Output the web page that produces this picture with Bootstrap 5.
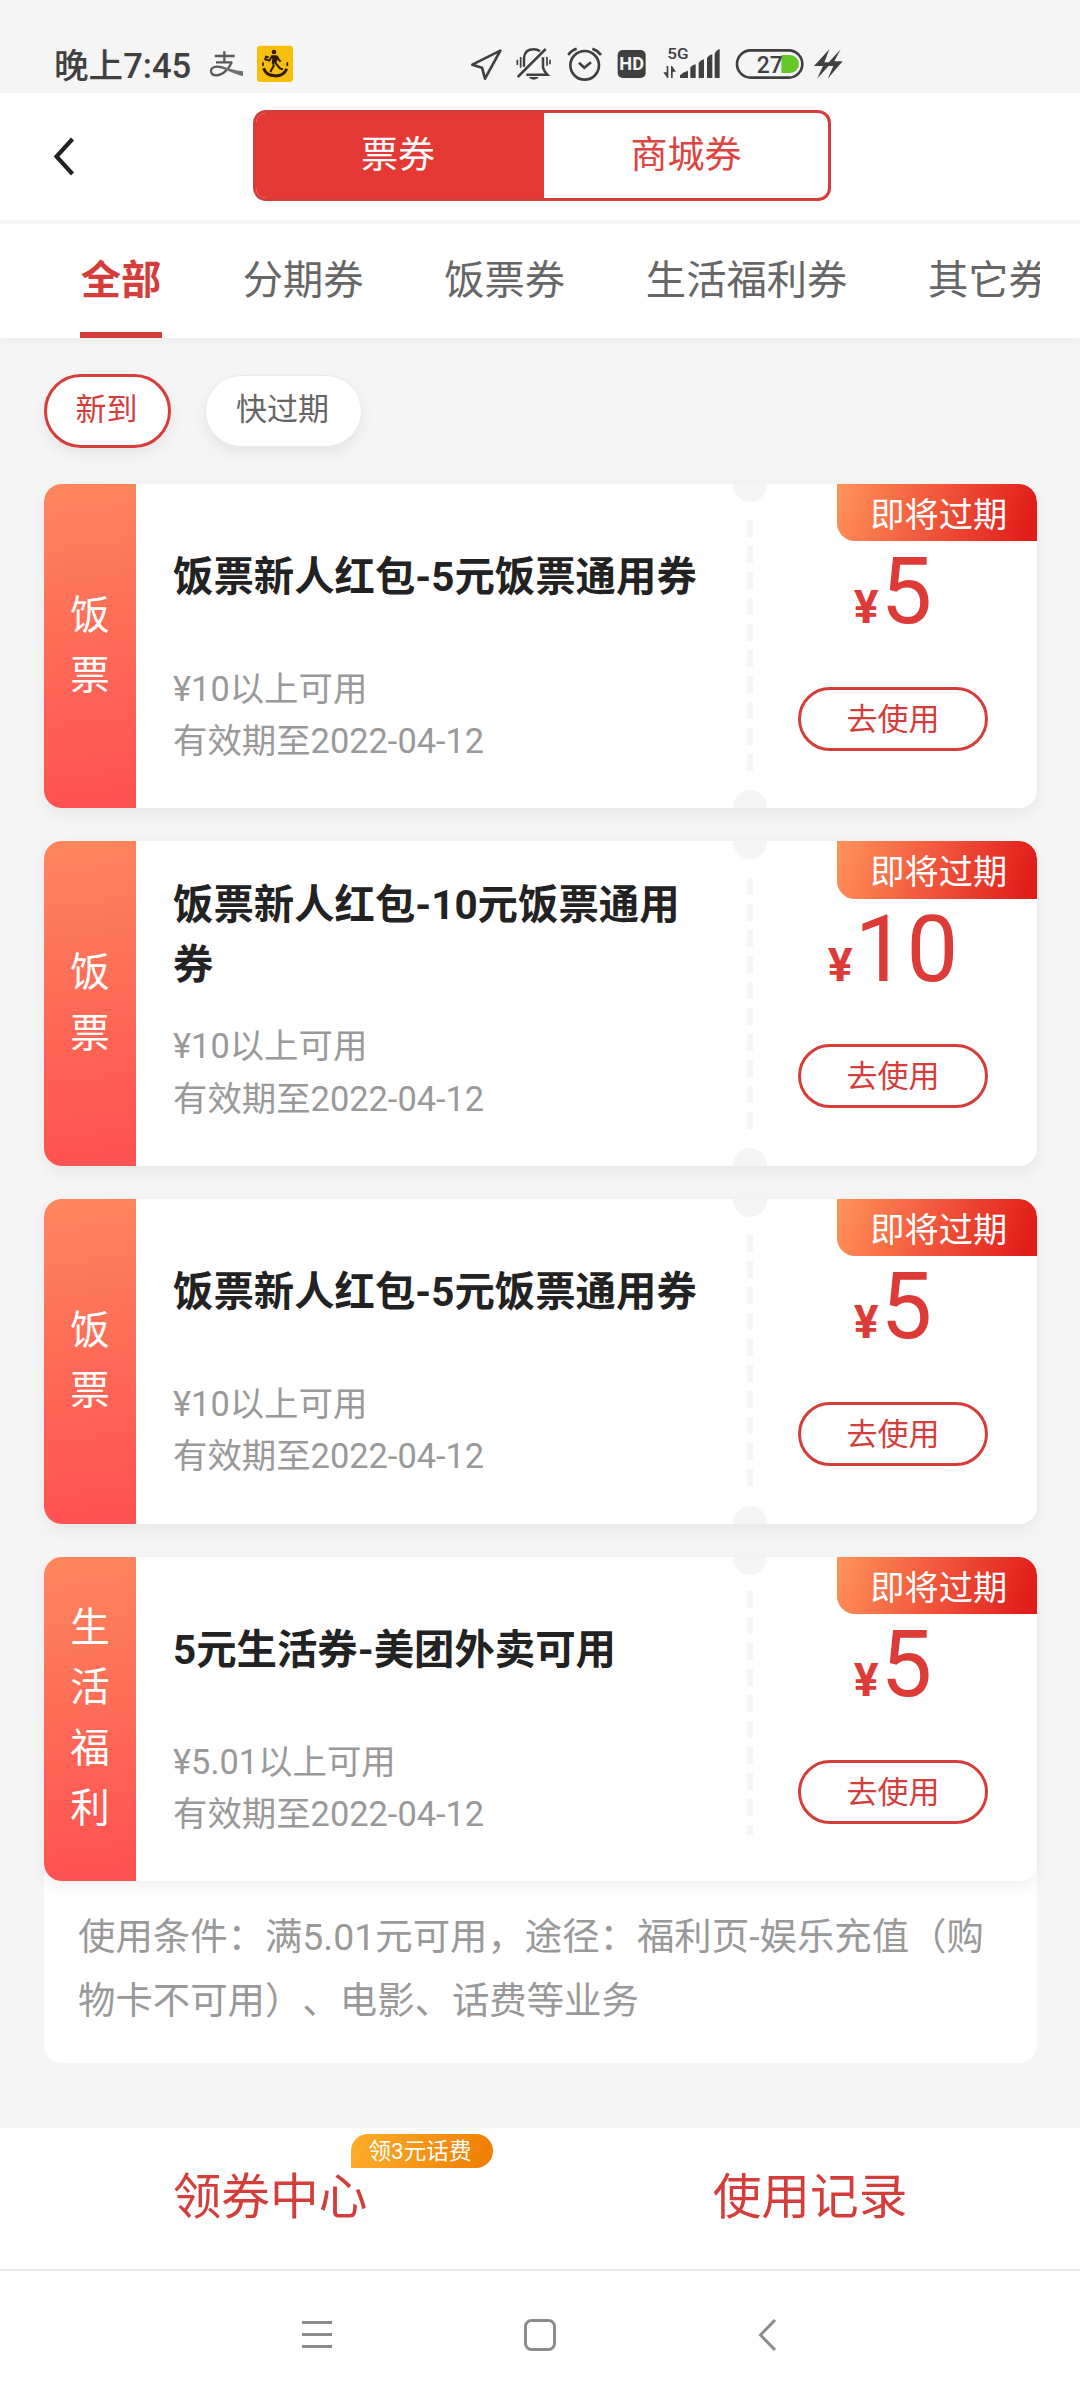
<!DOCTYPE html>
<html lang="zh-CN">
<head>
<meta charset="utf-8">
<meta name="viewport" content="width=device-width, initial-scale=1">
<title>票券</title>
<link href="https://cdn.jsdelivr.net/npm/bootstrap@5.3.0/dist/css/bootstrap.min.css" rel="stylesheet">
<style>
  :root { --cred: #d43d3a; --page: #f5f5f5; }
  body { width: 1080px; height: 2400px; margin: 0; overflow: hidden; background: var(--page); color: #666;
    font-family: Roboto, "Noto Sans CJK SC", sans-serif; text-spacing-trim: space-all; }
  .status-bar { height: 93px; padding: 0 0 0 54px; color: #404040; }
  .status-time { font-size: 34.6px; font-weight: 500; line-height: 40px; margin-top: 46px; width: 155px; white-space: nowrap; }
  .status-bar svg { flex: none; display: block; }
  .top-head { height: 127px; padding: 17px 0 0 253px; position: relative; }
  .head-back { position: absolute; left: 50px; top: 42px; }
  .seg-box { width: 578px; height: 91px; border: 3px solid var(--cred); border-radius: 13px; overflow: hidden; }
  .seg-item { font-size: 37px; line-height: 83px; color: #dd4440; padding-top: 1px; text-align: center; flex: 1 1 0; }
  .seg-item.on { background: #e53935; color: #fff; flex: 0 0 288px; padding-right: 4px; }
  .tab-strip { height: 114px; margin-top: 4px; padding: 0 40px 0 80px; box-shadow: 0 4px 8px rgba(0,0,0,.035); }
  .tab-clip { overflow: hidden; gap: 80.7px; height: 114px; }
  .tab-clip .nav-link { padding: 0; flex: none; font-size: 40.3px; line-height: 113px; color: #666; white-space: nowrap; height: 114px; border-radius: 0; }
  .tab-clip .nav-link.active { width: 82px; text-align: center; color: var(--cred); font-weight: 700; border-bottom: 6px solid var(--cred); }
  .chips { padding: 36px 44px 0; height: 146.4px; }
  .chip { height: 74px; width: 127px; border-radius: 37px; border: 3px solid var(--cred); background: #fff; color: var(--cred);
    font-size: 31px; line-height: 66px; text-align: center; padding-right: 2px; box-shadow: 0 6px 14px rgba(0,0,0,.07); }
  .chip.plain { width: 157px; height: 72px; margin: 1px 0 0 34px; border: 1px solid #eaeaea; color: #666; line-height: 68px; }
  .coupons { padding: 0 43px 0 44px; gap: 33px; }
  .coupon { height: 324.6px; border-radius: 18px; background: #fff; overflow: hidden; position: relative; }
  .coupon-wrap { border-radius: 18px; box-shadow: 0 6px 16px rgba(0,0,0,.06); position: relative; }
  .kind { width: 92px; flex: none; color: #fff; font-size: 39.5px; line-height: 60.5px; text-align: center;
    background: linear-gradient(172deg, #fd865c 2%, #fe6a57 50%, #ff5252 95%); }
  .kind span { width: 40px; }
  .detail { width: 596px; flex: none; padding: 34px 23px 0 37px; }
  .coupon-name { height: 121px; font-size: 40.4px; line-height: 60px; font-weight: 700; color: #222; }
  .rule { margin-top: 24px; font-size: 34.4px; line-height: 52.5px; color: #999; }
  .tear { width: 37px; flex: none; margin-left: -1px; }
  .notch { width: 34px; height: 18px; background: var(--page); border-radius: 0 0 17px 17px; }
  .notch.low { border-radius: 17px 17px 0 0; }
  .dash { width: 6px; height: 252px; margin-left: 1px; background: repeating-linear-gradient(#f5f5f5 0 17px, transparent 17px 26px); }
  .dash.short { height: 244px; }
  .buy { flex: 1; padding-right: 4px; }
  .soon { position: absolute; right: 0; top: 0; width: 200.5px; height: 57.5px; border-radius: 0 18px 0 18px; color: #fff;
    font-size: 34.2px; line-height: 63px; text-align: center; padding-left: 4px;
    background: linear-gradient(107deg, #ff9159 2%, #f1543a 50%, #e01d1b 95%); }
  .price { margin-top: 57.5px; height: 145.500px; line-height: 102px; font-size: 92px; color: #dc3b37; font-weight: 400; margin-left: -15px; white-space: nowrap; }
  .price b { font-size: 46.5px; font-weight: 700; margin-right: 2px; }
  .use-btn { width: 190px; height: 64px; border: 3px solid var(--cred); border-radius: 32px; color: var(--cred);
    font-size: 31px; line-height: 60px; text-align: center; margin-left: -15px; }
  .note { background: #fff; border-radius: 0 0 18px 18px; height: 199.6px; margin-top: -18px; padding: 43px 30px 0 34px;
    font-size: 37.4px; line-height: 63.8px; color: #999; }
  .foot { height: 142px; margin-top: 65px; padding-top: 33px; font-size: 48.7px; line-height: 73px; color: var(--cred); text-align: center; }
  .gift { position: absolute; left: 351px; top: -27px; width: 142px; height: 34px; border-radius: 17px 17px 17px 0; color: #fff;
    font-size: 22.6px; line-height: 35px; padding-right: 4px; background: linear-gradient(107deg, #fdae2c, #ef7c00); }
  .sys-nav { height: 131px; border-top: 2px solid #e8e8e8; }
</style>
</head>
<body class="d-flex flex-column">
  <div class="status-bar d-flex flex-none">
    <div class="status-time">晚上7:45</div>
    <svg width="90" height="93" viewBox="209 0 90 93">
      <g transform="translate(195 36) scale(.33333)" fill="none">
        <path d="M59 60H119M88 46V77M63 79H112" stroke="#5a5a5a" stroke-width="7"/>
        <path d="M110 79C102 98 84 118 64 118C45 118 43 98 58 93C68 90 79 93 90 97" stroke="#5a5a5a" stroke-width="7"/>
        <path d="M80 90C100 98 120 103 144 106V121C122 114 96 104 78 96z" fill="#707070"/>
        <rect x="186" y="29" width="108" height="109" rx="10" fill="#f7bf0c"/>
        <g stroke="#2c1a05" stroke-width="6">
          <circle cx="237" cy="48" r="7" fill="#2c1a05" stroke="none"/>
          <path d="M228 58h18l3 10-6 14h-13l2-14z" fill="#2c1a05" stroke="none"/>
          <path d="M231 61l-8 13-12-4 2-8 8 2M246 61l6 11 5 5M234 80l2 10-5 8-5 10M241 80l8 10 6 7 9 3"/>
          <path d="M204 79v11M277 79v11" stroke-width="5"/>
          <path d="M206 97C216 127 264 127 275 98" stroke-width="9"/>
        </g>
      </g>
    </svg>
    <svg class="ms-auto" width="667" height="93" viewBox="-80 -60 2001 279" fill="none" stroke="#404040">
      <path d="M182 92L98 134l29 9 9 33z" stroke-width="8" stroke-linejoin="round"/>
      <g stroke-width="7.500">
        <path d="M234 171L318 87" />
        <path d="M253 140V113C255 96 267 88 282 88c8 0 14 2 19 6M310 112v31c3 9 7 15 13 21H260" />
        <path d="M243 111v32M322 111v26M233 119v16M331 119v14" stroke-width="5"/>
        <path d="M267 171q15 17 31 0z" fill="#404040" stroke="none"/>
      </g>
      <circle cx="435" cy="136" r="43" stroke-width="8"/>
      <path d="M418 128l16 15 20-16" stroke-width="8"/>
      <path d="M386 105q8-14 25-19M458 86q17 6 26 19" stroke-width="8"/>
      <rect x="534" y="90" width="84" height="84" rx="15" fill="#404040" stroke="none"/>
      <g stroke="none" fill="#404040" font-family="Roboto, sans-serif">
        <text x="539" y="151" font-size="53" font-weight="700" fill="#f5f5f5" textLength="74" lengthAdjust="spacingAndGlyphs">HD</text>
        <text x="683" y="116" font-size="45" font-weight="500" textLength="64" lengthAdjust="spacingAndGlyphs">5G</text>
        <path d="M721 174v-8q10-10 24-14v22zM752 174v-32q7-8 16-9v41zM777 174v-46q7-9 16-10v56zM802 174v-60q7-10 16-11v71zM825 174v-73q6-12 15-14v87z"/>
        <path d="M681 138h5v36h-3l-12-17h10zM694 174v-36h3l12 17h-10v19z"/>
      </g>
      <path d="M1025 105h26a26 26 0 0 1 0 54h-26z" fill="#65c728" stroke="none"/>
      <rect x="892" y="91" width="196" height="82" rx="41" stroke-width="8"/>
      <text x="951" y="158" font-family="Roboto, sans-serif" font-size="72" font-weight="500" fill="#404040" stroke="none" textLength="78" lengthAdjust="spacingAndGlyphs">27</text>
      <path d="M1169 88l-46 50h27l-18 38 45-49h-23zM1203 88l-46 50h24l-17 38 45-52h-25z" fill="#404040" stroke="none"/>
    </svg>
  </div>

  <header class="top-head bg-white">
    <svg class="head-back" width="30" height="44" viewBox="0 0 30 44"><path d="M22.500 4L6.500 21.500L22.500 39" fill="none" stroke="#222" stroke-width="4.200"/></svg>
    <div class="seg-box d-flex">
      <div class="seg-item on">票券</div>
      <div class="seg-item">商城券</div>
    </div>
  </header>

  <nav class="tab-strip bg-white">
    <div class="tab-clip nav flex-nowrap">
      <a class="nav-link active">全部</a>
      <a class="nav-link">分期券</a>
      <a class="nav-link">饭票券</a>
      <a class="nav-link">生活福利券</a>
      <a class="nav-link">其它券</a>
    </div>
  </nav>

  <div class="chips d-flex align-items-start">
    <div class="chip">新到</div>
    <div class="chip plain">快过期</div>
  </div>

  <main class="coupons d-flex flex-column">
    <div class="coupon-wrap"><article class="coupon d-flex">
      <div class="kind d-flex align-items-center justify-content-center"><span>饭票</span></div>
      <div class="detail">
        <div class="coupon-name d-flex align-items-center">饭票新人红包-5元饭票通用券</div>
        <div class="rule">¥10以上可用<br>有效期至2022-04-12</div>
      </div>
      <div class="tear d-flex flex-column justify-content-between align-items-center"><div class="notch"></div><div class="dash"></div><div class="notch low"></div></div>
      <div class="buy d-flex flex-column align-items-center">
        <div class="soon">即将过期</div>
        <div class="price"><b>¥</b>5</div>
        <div class="use-btn">去使用</div>
      </div>
    </article></div>

    <div class="coupon-wrap"><article class="coupon d-flex">
      <div class="kind d-flex align-items-center justify-content-center"><span>饭票</span></div>
      <div class="detail">
        <div class="coupon-name d-flex align-items-center">饭票新人红包-10元饭票通用券</div>
        <div class="rule">¥10以上可用<br>有效期至2022-04-12</div>
      </div>
      <div class="tear d-flex flex-column justify-content-between align-items-center"><div class="notch"></div><div class="dash"></div><div class="notch low"></div></div>
      <div class="buy d-flex flex-column align-items-center">
        <div class="soon">即将过期</div>
        <div class="price"><b>¥</b>10</div>
        <div class="use-btn">去使用</div>
      </div>
    </article></div>

    <div class="coupon-wrap"><article class="coupon d-flex">
      <div class="kind d-flex align-items-center justify-content-center"><span>饭票</span></div>
      <div class="detail">
        <div class="coupon-name d-flex align-items-center">饭票新人红包-5元饭票通用券</div>
        <div class="rule">¥10以上可用<br>有效期至2022-04-12</div>
      </div>
      <div class="tear d-flex flex-column justify-content-between align-items-center"><div class="notch"></div><div class="dash"></div><div class="notch low"></div></div>
      <div class="buy d-flex flex-column align-items-center">
        <div class="soon">即将过期</div>
        <div class="price"><b>¥</b>5</div>
        <div class="use-btn">去使用</div>
      </div>
    </article></div>

    <div>
      <div class="coupon-wrap"><article class="coupon d-flex">
        <div class="kind d-flex align-items-center justify-content-center"><span>生活福利</span></div>
        <div class="detail">
          <div class="coupon-name d-flex align-items-center">5元生活券-美团外卖可用</div>
          <div class="rule">¥5.01以上可用<br>有效期至2022-04-12</div>
        </div>
        <div class="tear d-flex flex-column gap-3 align-items-center"><div class="notch"></div><div class="dash short"></div></div>
        <div class="buy d-flex flex-column align-items-center">
          <div class="soon">即将过期</div>
          <div class="price"><b>¥</b>5</div>
          <div class="use-btn">去使用</div>
        </div>
      </article></div>
      <div class="note">使用条件：满5.01元可用，途径：福利页-娱乐充值（购物卡不可用）、电影、话费等业务</div>
    </div>
  </main>

  <footer class="foot d-flex bg-white">
    <div class="col-6 position-relative">领券中心<span class="gift">领3元话费</span></div>
    <div class="col-6">使用记录</div>
  </footer>

  <div class="sys-nav bg-white">
    <svg class="d-block" width="1080" height="128" viewBox="0 2271 1080 128" fill="none" stroke="#8c8c8c" stroke-width="3">
      <path d="M302 2322.500h30M302 2334.500h30M302 2346.500h30"/>
      <rect x="525.500" y="2320.500" width="29" height="29" rx="6"/>
      <path d="M775 2320l-14.500 15 14.500 15"/>
    </svg>
  </div>
<script src="https://cdn.jsdelivr.net/npm/bootstrap@5.3.0/dist/js/bootstrap.bundle.min.js"></script>
</body>
</html>
